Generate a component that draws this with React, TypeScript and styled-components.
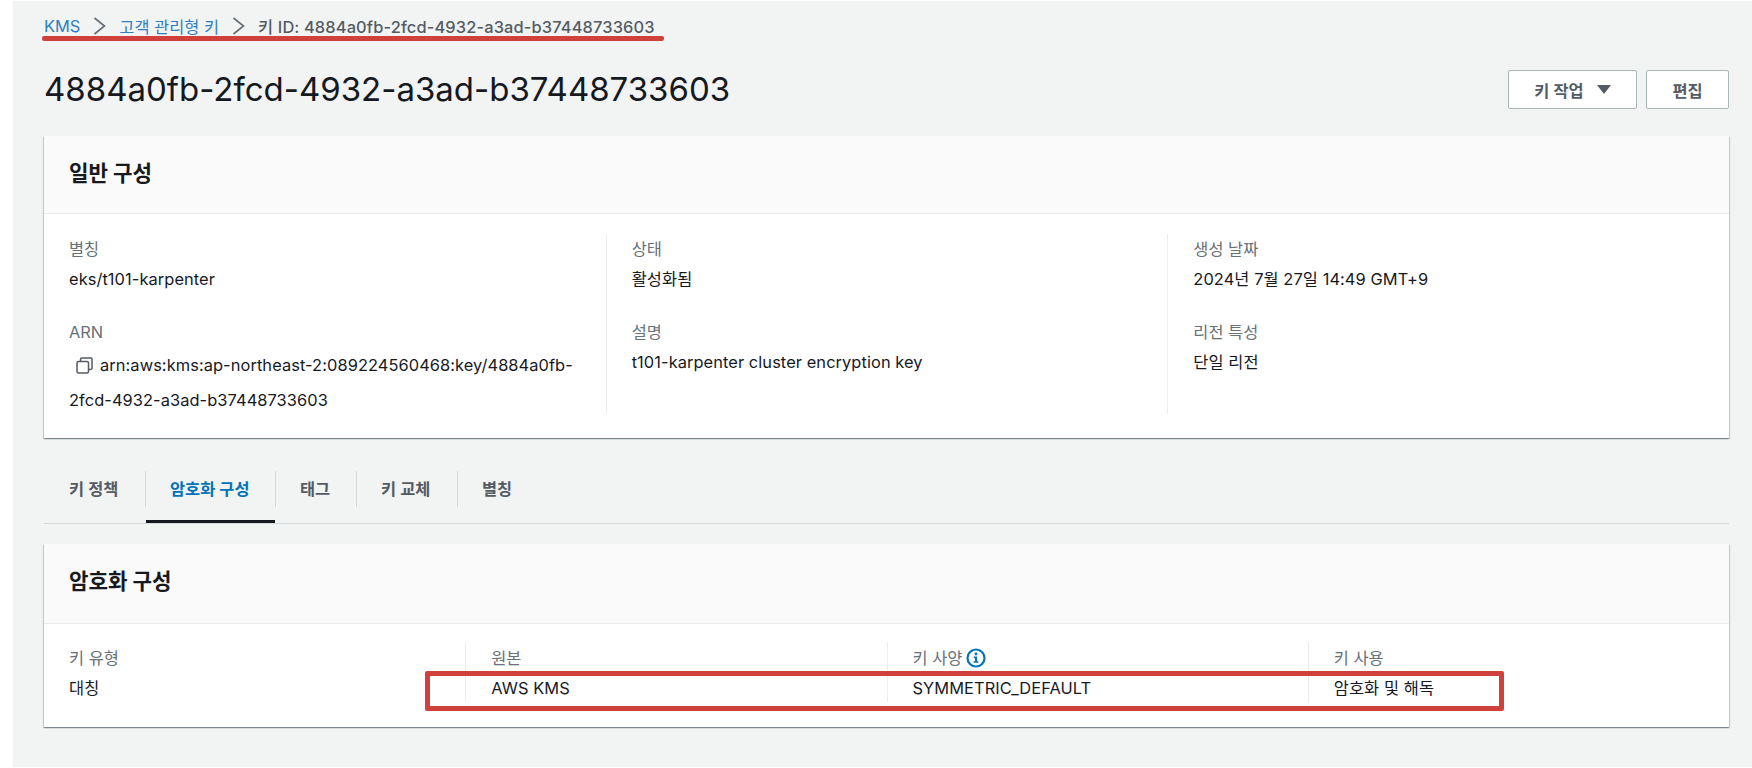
import React from "react";
import styled, { createGlobalStyle } from "styled-components";

const Global = createGlobalStyle`
  html, body { margin: 0; padding: 0; background: #fff; }
  body { font-family: "Inter", "Noto Sans CJK KR", sans-serif; color: #16191f; }
`;

const Page = styled.div`
  position: relative;
  box-sizing: border-box;
  margin: 1px 0 0 13px;
  height: 766px;
  background: #f2f3f3;
  padding: 0 23px 0 31px;
  overflow: hidden;
`;

const Breadcrumbs = styled.nav`
  display: flex;
  align-items: center;
  height: 49px;
  font-size: 16.4px;
  color: #545b64;
`;

const Crumb = styled.span<{ $link?: boolean }>`
  color: ${(p) => (p.$link ? "#2f7fc1" : "#545b64")};
  font-weight: ${(p) => (p.$link ? 400 : 500)};
  letter-spacing: ${(p) => (p.$link ? 0 : 0.14)}px;
  white-space: nowrap;
`;

const Chevron = styled.svg`
  width: 13px;
  height: 18px;
  margin: 0 13px;
  flex: none;
`;

const HeaderRow = styled.div`
  display: flex;
  align-items: flex-start;
  justify-content: space-between;
  height: 86px;
`;

const Title = styled.h1`
  margin: 17px 0 0;
  font-size: 33px;
  line-height: 44px;
  font-weight: 400;
  color: #16191f;
`;

const Actions = styled.div`
  display: flex;
  gap: 9px;
  margin-top: 20px;
`;

const Button = styled.button<{ $width: number }>`
  display: flex;
  align-items: center;
  justify-content: center;
  gap: 13px;
  width: ${(p) => p.$width}px;
  height: 39px;
  padding: 0;
  background: #fff;
  border: 1px solid #aab7b8;
  border-radius: 2px;
  font-family: inherit;
  font-size: 16.4px;
  font-weight: 600;
  color: #545b64;
`;

const Caret = styled.span`
  width: 0;
  height: 0;
  border-left: 7px solid transparent;
  border-right: 7px solid transparent;
  border-top: 9px solid #545b64;
`;

const Card = styled.section`
  background: #fff;
  box-shadow: 0 1px 1px 0 rgba(0, 28, 36, 0.3), 1px 1px 1px 0 rgba(0, 28, 36, 0.15),
    -1px 1px 1px 0 rgba(0, 28, 36, 0.15);
`;

const CardHeader = styled.div<{ $height: number }>`
  box-sizing: border-box;
  display: flex;
  align-items: center;
  height: ${(p) => p.$height}px;
  padding: 0 25px ${(p) => p.$height - 78}px;
  background: #fafafa;
  border-bottom: 1px solid #eaeded;
`;

const CardTitle = styled.h2`
  margin: 0 0 6px;
  font-size: 21.2px;
  font-weight: 700;
  color: #16191f;
`;

const Columns = styled.div<{ $count: number; $padding: string; $height: number }>`
  box-sizing: border-box;
  display: grid;
  grid-template-columns: repeat(${(p) => p.$count}, 1fr);
  grid-auto-rows: minmax(0, 1fr);
  height: ${(p) => p.$height}px;
  padding: ${(p) => p.$padding};
`;

const Column = styled.div`
  box-sizing: border-box;
  min-height: 0;
  padding: 0 25px;
  border-left: 1px solid #eaeded;
  &:first-child { border-left: 0; }
`;

const Field = styled.div`
  margin-bottom: 23px;
  &:last-child { margin-bottom: 0; }
`;

const Label = styled.div`
  display: flex;
  align-items: center;
  gap: 4px;
  height: 30px;
  font-size: 16.4px;
  line-height: 30px;
  color: #687078;
`;

const Value = styled.div<{ $tall?: boolean }>`
  font-size: 16.4px;
  letter-spacing: 0.08px;
  line-height: ${(p) => (p.$tall ? 34 : 30)}px;
  padding-top: ${(p) => (p.$tall ? 1 : 0)}px;
  color: #16191f;
  white-space: nowrap;
`;

const CopyIcon = styled.svg`
  width: 17px;
  height: 17px;
  margin: 0 7px 0 7px;
  vertical-align: -3px;
`;

const InfoIcon = styled.svg`
  width: 20px;
  height: 20px;
`;

const Tabs = styled.div`
  display: flex;
  height: 106px;
  box-sizing: border-box;
  padding-top: 33px;
`;

const TabBar = styled.div`
  display: flex;
  align-items: stretch;
  flex: 1;
  height: 53px;
  box-sizing: border-box;
  padding-bottom: 16px;
  border-bottom: 1px solid #d5dbdb;
`;

const Tab = styled.div<{ $active?: boolean; $width: number }>`
  position: relative;
  box-sizing: border-box;
  display: flex;
  align-items: center;
  width: ${(p) => p.$width}px;
  padding: 0 0 2px 24px;
  font-size: 16.4px;
  font-weight: 600;
  color: ${(p) => (p.$active ? "#0073bb" : "#545b64")};
  border-right: 1px solid #d5dbdb;
  &:first-child { padding-left: 25px; width: 102px; }
  &:last-child { border-right: 0; }
  ${(p) =>
    p.$active
      ? `&::after { content: ""; position: absolute; left: 0; right: 0; bottom: -16px; height: 3px; background: #16191f; }`
      : ""}
`;

const Underline = styled.div`
  position: absolute;
  left: 29px;
  top: 35px;
  width: 622px;
  height: 5px;
  border-radius: 2px;
  background: #d0413c;
`;

const RedBox = styled.div`
  position: absolute;
  box-sizing: border-box;
  left: 412px;
  top: 670px;
  width: 1079px;
  height: 40px;
  border: 5px solid #d0413c;
  border-radius: 2px;
`;

const Arrow = () => (
  <Chevron viewBox="0 0 13 18" fill="none" stroke="#687078" strokeWidth="1.7">
    <path d="M1.5 1l10 8-10 8" />
  </Chevron>
);

export default function App() {
  return (
    <Page>
      <Global />
      <Breadcrumbs>
        <Crumb $link>KMS</Crumb>
        <Arrow />
        <Crumb $link>고객 관리형 키</Crumb>
        <Arrow />
        <Crumb>키 ID: 4884a0fb-2fcd-4932-a3ad-b37448733603</Crumb>
      </Breadcrumbs>
      <HeaderRow>
        <Title>4884a0fb-2fcd-4932-a3ad-b37448733603</Title>
        <Actions>
          <Button $width={129}>
            키 작업 <Caret />
          </Button>
          <Button $width={83}>편집</Button>
        </Actions>
      </HeaderRow>
      <Card>
        <CardHeader $height={78}>
          <CardTitle>일반 구성</CardTitle>
        </CardHeader>
        <Columns $count={3} $padding="20px 0 25px" $height={224}>
          <Column>
            <Field>
              <Label>별칭</Label>
              <Value>eks/t101-karpenter</Value>
            </Field>
            <Field>
              <Label>ARN</Label>
              <Value $tall>
                <CopyIcon viewBox="0 0 17 17" fill="none" stroke="#545b64" strokeWidth="1.5">
                  <rect x="1" y="4.5" width="11.5" height="11.5" rx="1.5" />
                  <path d="M4.5 4.5V2.5a1.5 1.5 0 0 1 1.5-1.5h9a1 1 0 0 1 1 1v9a1.5 1.5 0 0 1-1.5 1.5h-2" />
                </CopyIcon>
                arn:aws:kms:ap-northeast-2:089224560468:key/4884a0fb-
              </Value>
              <Value $tall>2fcd-4932-a3ad-b37448733603</Value>
            </Field>
          </Column>
          <Column>
            <Field>
              <Label>상태</Label>
              <Value>활성화됨</Value>
            </Field>
            <Field>
              <Label>설명</Label>
              <Value>t101-karpenter cluster encryption key</Value>
            </Field>
          </Column>
          <Column>
            <Field>
              <Label>생성 날짜</Label>
              <Value>2024년 7월 27일 14:49 GMT+9</Value>
            </Field>
            <Field>
              <Label>리전 특성</Label>
              <Value>단일 리전</Value>
            </Field>
          </Column>
        </Columns>
      </Card>
      <Tabs>
        <TabBar>
          <Tab $width={102}>키 정책</Tab>
          <Tab $width={130} $active>암호화 구성</Tab>
          <Tab $width={81}>태그</Tab>
          <Tab $width={101}>키 교체</Tab>
          <Tab $width={120}>별칭</Tab>
        </TabBar>
      </Tabs>
      <Card>
        <CardHeader $height={80}>
          <CardTitle>암호화 구성</CardTitle>
        </CardHeader>
        <Columns $count={4} $padding="19px 0 25px" $height={103}>
          <Column>
            <Label>키 유형</Label>
            <Value>대칭</Value>
          </Column>
          <Column>
            <Label>원본</Label>
            <Value>AWS KMS</Value>
          </Column>
          <Column>
            <Label>
              키 사양
              <InfoIcon viewBox="0 0 20 20">
                <circle cx="10" cy="10" r="8.5" fill="none" stroke="#0073bb" strokeWidth="2.2" />
                <circle cx="10" cy="6" r="1.4" fill="#0073bb" />
                <path d="M7.8 8.6h3.3v4.6h1.3v1.6H7.6v-1.6h1.4v-3h-1.2z" fill="#0073bb" />
              </InfoIcon>
            </Label>
            <Value>SYMMETRIC_DEFAULT</Value>
          </Column>
          <Column>
            <Label>키 사용</Label>
            <Value>암호화 및 해독</Value>
          </Column>
        </Columns>
      </Card>
      <Underline />
      <RedBox />
    </Page>
  );
}
